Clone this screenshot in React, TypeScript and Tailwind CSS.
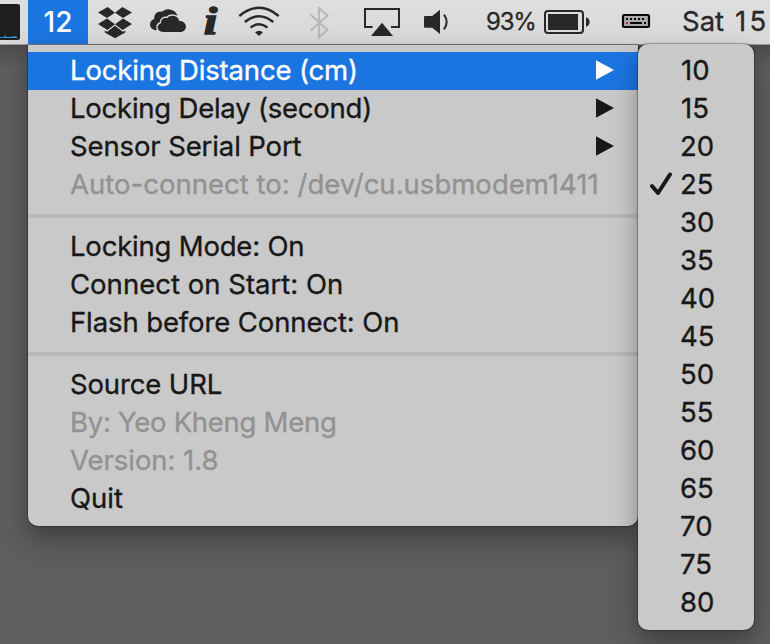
import React from "react";

type Item = { label: string; tracking: string; kind?: "active" | "disabled"; arrow?: boolean };

const groups: Item[][] = [
  [
    { label: "Locking Distance (cm)", tracking: "tracking-[-0.16px]", kind: "active", arrow: true },
    { label: "Locking Delay (second)", tracking: "tracking-[-0.23px]", arrow: true },
    { label: "Sensor Serial Port", tracking: "tracking-[-0.12px]", arrow: true },
    { label: "Auto-connect to: /dev/cu.usbmodem1411", tracking: "tracking-[0.02px]", kind: "disabled" },
  ],
  [
    { label: "Locking Mode: On", tracking: "tracking-[-0.2px]" },
    { label: "Connect on Start: On", tracking: "tracking-[0.02px]" },
    { label: "Flash before Connect: On", tracking: "tracking-[-0.11px]" },
  ],
  [
    { label: "Source URL", tracking: "tracking-[-0.13px]" },
    { label: "By: Yeo Kheng Meng", tracking: "tracking-[-0.28px]", kind: "disabled" },
    { label: "Version: 1.8", tracking: "tracking-[-0.05px]", kind: "disabled" },
    { label: "Quit", tracking: "tracking-[0px]" },
  ],
];

const distances = [10, 15, 20, 25, 30, 35, 40, 45, 50, 55, 60, 65, 70, 75, 80];

function Row({ item }: { item: Item }) {
  const tone =
    item.kind === "active"
      ? "bg-[#1b75e1] text-white"
      : item.kind === "disabled"
        ? "text-[#929292]"
        : "text-[#181818]";
  return (
    <div className={`flex h-[38px] items-center justify-between pr-[24px] pl-[42px] whitespace-nowrap ${tone}`}>
      <span className={item.tracking}>{item.label}</span>
      {item.arrow && (
        <svg width="18" height="20" viewBox="0 0 18 20" fill="currentColor" className="-mt-0.5 shrink-0">
          <path d="M0 .3 18 10 0 19.7Z" />
        </svg>
      )}
    </div>
  );
}

function MenuBar() {
  return (
    <header className="flex h-[45px] items-start border-b border-[#999999] bg-gradient-to-b from-[#dedede] to-[#d9d9d9] text-[#282828]">
      <svg width="20" height="44" viewBox="0 0 20 44" className="mr-2 shrink-0">
        <path d="M0 4h18a2 2 0 0 1 2 2v32a2 2 0 0 1-2 2H0Z" fill="#1e1e1e" />
        <path d="M0 38v-1l3 .3 2-1.800 1.500 1.500 5-.3 3-.7 3 1V38Z" fill="#2d93d2" />
      </svg>
      <div className="flex h-11 w-[60px] shrink-0 items-center justify-center bg-[#1b75e1] text-[28px] font-medium text-white">
        12
      </div>
      <svg width="110" height="44" viewBox="88 0 110 44" fill="#282828" className="shrink-0">
        <path d="m107.700 7 7.300 5.700-8 5.400-9-5.600Zm14.600 0 9.700 5.500-9 5.600-8-5.400ZM98 24l9-5.500 8 5.800-7.600 5.700Zm34 0-9-5.500-8 5.800 7.600 5.700ZM115 25.800l7.800 6 2.400-1.400v2.100L115 38.300l-10.200-5.800v-2.100l2.400 1.400Z" />
        <path d="M155.800 30.300c-3-.5-5.800-2.600-5.800-5.800 0-2.700 1.800-4.800 4.200-5.500-.3-5 3.500-8.200 7.900-7.200 1.800-2 4.600-2.800 7.500-2.400 4 .5 7 2.800 8 6.500l-8 5-8 8.500Z" />
        <path d="M163.500 32c-4 0-6.300-2.500-5.800-5.200.3-2 1.700-3.100 3.300-3.500-.3-3.600 2.700-5.800 6.200-5.100 3-4 11-2.700 12 2.800 3.700 0 6.700 2 6.700 5.500 0 3-2.200 5.500-5.500 5.500Z" stroke="#dcdcdc" strokeWidth="3" paintOrder="stroke" />
      </svg>
      <div className="flex h-11 w-9 shrink-0 items-start pl-[6px]">
        <span className="origin-left scale-x-[1.25] font-['Liberation_Serif',serif] text-[38px] leading-[43px] font-bold italic [-webkit-text-stroke:1.6px_#282828]">
          i
        </span>
      </div>
      <svg width="116" height="44" viewBox="234 0 116 44" fill="#282828" className="shrink-0">
        <g fill="none" stroke="#282828" strokeWidth="2.400">
          <path d="M239.300 16q19.600-16.300 39.400 0M244.800 22q14-11.500 28.400 0M250.500 27.500q8.500-6.500 17 0" />
        </g>
        <path d="M255 32.300q4-3 8 0L259 36Z" />
        <path d="m310.500 14.500 17 15.500-8.500 7.300V8.200l8.500 7.300-17 15" fill="none" stroke="#b7b7b7" strokeWidth="2" />
      </svg>
      <svg width="136" height="44" viewBox="350 0 136 44" fill="#282828" className="shrink-0">
        <path d="M372.500 27H365V9h34v18h-8" fill="none" stroke="#282828" strokeWidth="2" />
        <path d="m382 22.700 11 13.300h-22Z" />
        <path d="M424 17q0-1 1-1h7.200l7.800-6.200V34l-7.800-6.300H425q-1 0-1-1Z" />
        <path d="M444 14.700q5.300 7.300 0 14.600M447.500 13" fill="none" stroke="#282828" strokeWidth="2" />
      </svg>
      <div className="flex h-11 w-[58px] shrink-0 items-center text-[24px] tracking-[-1.2px] [-webkit-text-stroke:0.3px]">93%</div>
      <svg width="138" height="44" viewBox="544 0 138 44" fill="#282828" className="shrink-0">
        <rect x="545" y="11" width="38" height="22" rx="3" fill="none" stroke="#282828" strokeWidth="2" />
        <path d="M548 14h30v16h-30ZM586 17.300q3.600 1 3.600 4.700t-3.600 4.700Z" />
        <rect x="623" y="15" width="26" height="12" rx="1" fill="#aaa" stroke="#080808" strokeWidth="2.200" />
        <path d="M626 18h2v2h-2Zm4 0h2v2h-2Zm4 0h2v2h-2Zm4 0h2v2h-2Zm4 0h2v2h-2ZM630 22h12v2h-12Zm14 0h2v2h-2Z" fill="#080808" />
        <path d="M626 22h2v2h-2Z" fill="#d0202b" />
      </svg>
      <div className="flex h-11 shrink-0 items-center gap-[11px] whitespace-nowrap [-webkit-text-stroke:0.3px]">
        <span>Sat</span>
        <span className="tracking-[3.2px]">15</span>
      </div>
    </header>
  );
}

export default function App() {
  return (
    <div className="relative h-[644px] w-[770px] overflow-hidden bg-[#5e5e5e] font-['Inter',sans-serif] text-[27.5px]">
      <MenuBar />
      <div className="h-6 bg-gradient-to-b from-black/20 to-transparent" />
      <section className="absolute top-[45px] left-[28px] w-[610px] rounded-b-[10px] bg-[#c9c9c9] pt-[7px] pb-2 shadow-[0_0_1px_1px_rgba(0,0,0,0.28),0_12px_26px_rgba(0,0,0,0.35)] [-webkit-text-stroke:0.35px]">
        {groups.map((group, index) => (
          <React.Fragment key={index}>
            {index > 0 && <div className="my-[10px] h-1 bg-[#b9b9b9]" />}
            {group.map((item) => (
              <Row key={item.label} item={item} />
            ))}
          </React.Fragment>
        ))}
      </section>
      <section className="absolute top-[44px] left-[638px] w-[116px] rounded-[10px] bg-[#c9c9c9] py-2 text-[#181818] shadow-[0_0_1px_1px_rgba(0,0,0,0.28),0_12px_26px_rgba(0,0,0,0.35)] [-webkit-text-stroke:0.35px]">
        {distances.map((value) => (
          <div key={value} className="flex h-[38px] items-center pl-3">
            <span className="flex w-[30px] shrink-0">
              {value === 25 && (
                <svg width="23" height="24" viewBox="0 0 23 24" fill="none" stroke="currentColor" strokeWidth="4" strokeLinecap="round" strokeLinejoin="round" className="-mt-0.5">
                  <path d="m2 14 6 7L20 2.500" />
                </svg>
              )}
            </span>
            <span className={value < 20 ? "pl-px" : ""}>{value}</span>
          </div>
        ))}
      </section>
    </div>
  );
}
